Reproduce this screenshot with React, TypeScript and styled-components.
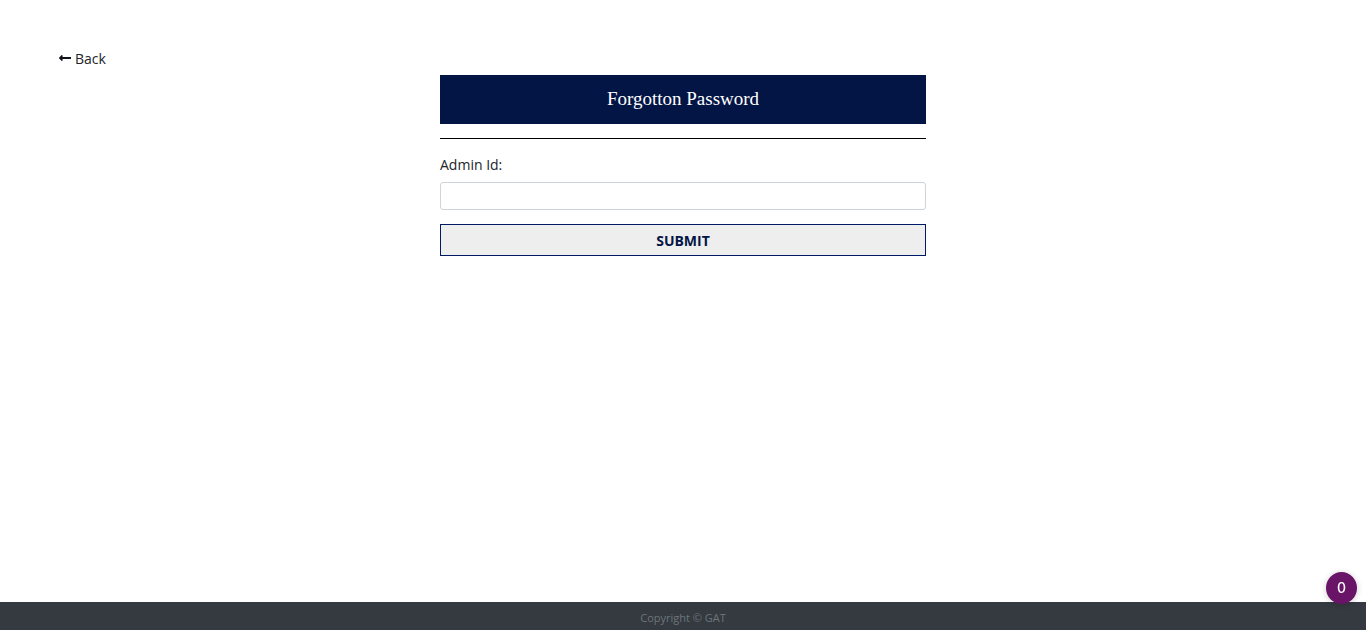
import React from "react";
import styled, { createGlobalStyle } from "styled-components";

const GlobalStyle = createGlobalStyle`
  *, *::before, *::after { box-sizing: border-box; }
  body {
    margin: 0;
    background: #fff;
    color: #212529;
    font-family: "Open Sans", sans-serif;
    font-size: 14px;
    line-height: 20px;
  }
`;

const Page = styled.div`
  display: flex;
  flex-direction: column;
  min-height: 100vh;
`;

const Main = styled.main`
  flex: 1;
  padding: 49px 59px 24px;
`;

const BackLink = styled.a`
  display: inline-flex;
  align-items: center;
  gap: 4px;
  height: 20px;
  color: #212529;
  text-decoration: none;
  vertical-align: top;
`;

const ArrowIcon = styled.svg`
  width: 12px;
  height: 14px;
  margin-bottom: 2px;
  fill: #111418;
`;

const Form = styled.form`
  display: flex;
  flex-direction: column;
  width: 100%;
  max-width: 486px;
  margin: 6px auto 0;
`;

const Title = styled.h1`
  margin: 0;
  padding: 11px 12px 13px;
  background: #031545;
  color: #fff;
  font-family: "Liberation Serif", serif;
  font-size: 19px;
  font-weight: 400;
  line-height: 25px;
  text-align: center;
`;

const Divider = styled.hr`
  width: 100%;
  margin: 14px 0 16px;
  border: 0;
  border-top: 1px solid #000;
`;

const Label = styled.label`
  margin-bottom: 7px;
`;

const TextField = styled.input`
  width: 100%;
  height: 28px;
  padding: 4px 8px;
  border: 1px solid #ced4da;
  border-radius: 3px;
  background: #fff;
  color: #495057;
  font: inherit;
`;

const SubmitButton = styled.button`
  height: 32px;
  margin-top: 14px;
  padding: 2px 12px 0;
  border: 1px solid #001a66;
  background: #eee;
  color: #031545;
  font-family: inherit;
  font-size: 14px;
  font-weight: 700;
  line-height: 20px;
  cursor: pointer;
`;

const Footer = styled.footer`
  padding: 6px 12px 2px;
  background: #343a40;
  color: #6c757d;
  font-size: 11px;
  text-align: center;
`;

const CounterButton = styled.button`
  position: fixed;
  right: 9px;
  bottom: 26px;
  width: 31px;
  height: 32px;
  padding: 0;
  border: 0;
  border-radius: 50%;
  background: #6a1468;
  color: #fff;
  font-family: Inter, sans-serif;
  font-size: 14px;
  font-weight: 500;
  line-height: 20px;
  box-shadow: 0 1px 6px rgba(0, 0, 0, 0.2);
  cursor: pointer;
`;

export default function App() {
  return (
    <Page>
      <GlobalStyle />
      <Main>
        <BackLink href="#">
          <ArrowIcon viewBox="0 0 448 512" aria-hidden="true">
            <path d="M134.059 296H436c6.627 0 12-5.373 12-12v-56c0-6.627-5.373-12-12-12H134.059v-46.059c0-21.382-25.851-32.09-40.971-16.971L7.029 239.029c-9.373 9.373-9.373 24.569 0 33.941l86.059 86.059c15.119 15.119 40.971 4.411 40.971-16.971V296z" />
          </ArrowIcon>
          Back
        </BackLink>
        <Form onSubmit={(event) => event.preventDefault()}>
          <Title>Forgotton Password</Title>
          <Divider />
          <Label htmlFor="admin-id">Admin Id:</Label>
          <TextField id="admin-id" name="adminId" type="text" />
          <SubmitButton type="submit">SUBMIT</SubmitButton>
        </Form>
      </Main>
      <Footer>Copyright © GAT</Footer>
      <CounterButton type="button">0</CounterButton>
    </Page>
  );
}
